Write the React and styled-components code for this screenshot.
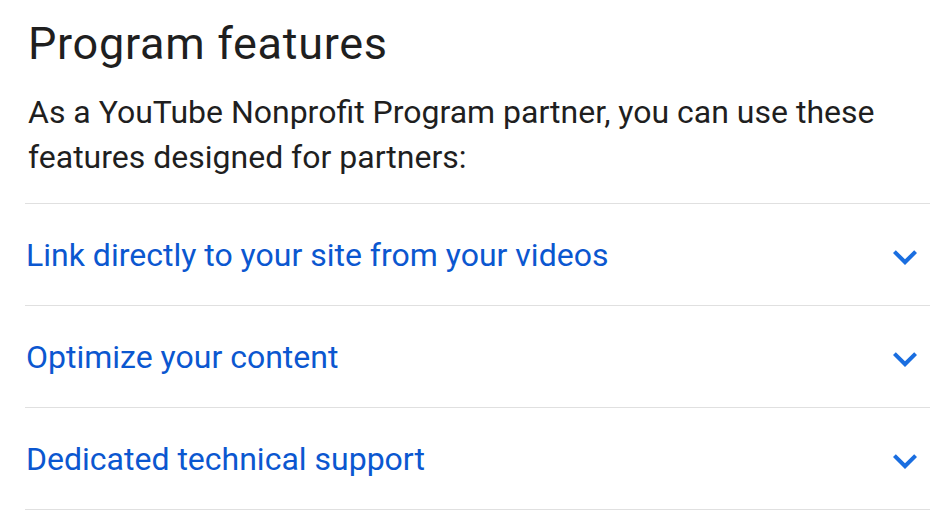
import React from "react";
import styled, { createGlobalStyle } from "styled-components";

const Global = createGlobalStyle`
  html, body { margin: 0; padding: 0; background: #ffffff; }
  body { font-family: Roboto, "Noto Sans", Arial, sans-serif; -webkit-font-smoothing: antialiased; }
`;

const Page = styled.div`
  padding: 14px 19px 0 25px;
`;

const Heading = styled.h2`
  margin: 0 0 0 3px;
  font-size: 45px;
  line-height: 60px;
  font-weight: 400;
  letter-spacing: 0.7px;
  color: #1f1f1f;
`;

const Intro = styled.p`
  margin: 16px 0 23px 3px;
  font-size: 32px;
  line-height: 45px;
  color: #1f1f1f;
`;

const List = styled.div`
  border-top: 1px solid #e0e0e0;
`;

const Row = styled.div`
  display: flex;
  align-items: center;
  justify-content: space-between;
  height: 101px;
  border-bottom: 1px solid #e0e0e0;
  cursor: pointer;
`;

const Title = styled.span`
  font-size: 32px;
  color: #0b57d0;
  padding-left: 1px;
`;

const Chevron = styled.svg`
  width: 48px;
  height: 48px;
  margin-right: 1px;
  margin-top: 4px;
  fill: #1a6ee0;
`;

const items = [
  "Link directly to your site from your videos",
  "Optimize your content",
  "Dedicated technical support",
];

export default function App() {
  return (
    <>
      <Global />
      <Page>
        <Heading>Program features</Heading>
        <Intro>
          As a YouTube Nonprofit Program partner, you can use these features designed for partners:
        </Intro>
        <List>
          {items.map((t) => (
            <Row key={t}>
              <Title>{t}</Title>
              <Chevron viewBox="0 0 24 24">
                <path d="M16.59 8.59L12 13.17 7.41 8.59 6 10l6 6 6-6z" />
              </Chevron>
            </Row>
          ))}
        </List>
      </Page>
    </>
  );
}
